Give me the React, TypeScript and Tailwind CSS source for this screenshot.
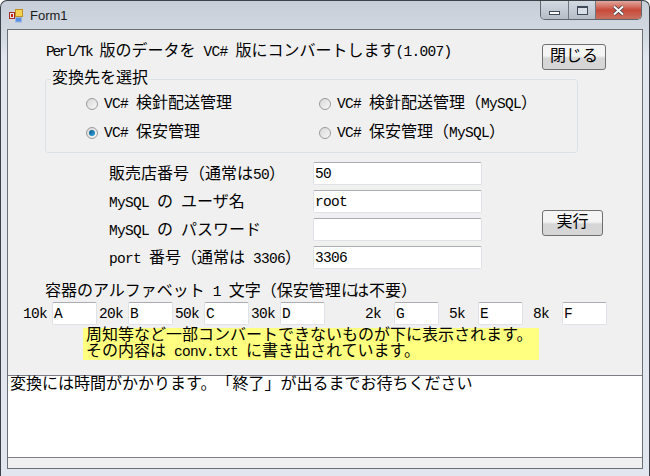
const font = { fontFamily: '"Liberation Mono", "Noto Sans CJK JP", monospace' };

// half-width runs sit at 8px per character next to the 16px kana/kanji
const T = ({ text, tight }: { text: string; tight?: boolean }) => (
  <>
    {text.split(/([\x20-\x7e]+)/).map((part, i) =>
      /^[\x20-\x7e]+$/.test(part) ? (
        <span key={i} className={tight ? "text-[14.5px] tracking-[-2.2px]" : "text-[14.5px] tracking-[-0.7px]"}>
          {part}
        </span>
      ) : (
        part
      ),
    )}
  </>
);

const Radio = ({ checked, label, width }: { checked?: boolean; label: string; width: string }) => (
  <div className={`flex items-center gap-[6px] ${width}`}>
    <span className="flex h-[12px] w-[12px] shrink-0 items-center justify-center rounded-full border border-[#9a9a9a] bg-gradient-to-br from-[#d8d8d8] to-[#f8f8f8]">
      {checked && <span className="h-[6px] w-[6px] rounded-full bg-gradient-to-br from-[#0a5a8c] to-[#2fa6dc]" />}
    </span>
    <span className="whitespace-pre"><T text={label} /></span>
  </div>
);

const Field = ({ value, width }: { value?: string; width: string }) => (
  <div className={`h-[23px] shrink-0 rounded-[2px] border border-[#dfe3e8] border-t-[#abadb3] bg-white pl-[1px] leading-[22px] ${width}`}>
    <T text={value ?? ""} />
  </div>
);

const Button = ({ label, width, height }: { label: string; width: string; height: string }) => (
  <div className={`flex items-center justify-center rounded-[3px] border border-[#707070] bg-gradient-to-b from-[#f4f4f4] from-45% to-[#d6d6d6] to-55% ${width} ${height}`}>
    {label}
  </div>
);

const Size = ({ label, value }: { label: string; value: string }) => (
  <div className="flex items-center">
    <span className="w-[29px]"><T text={label} /></span>
    <Field value={value} width="w-[45px]" />
  </div>
);

export default function App() {
  const fields = [
    ["販売店番号（通常は50）", "50"],
    ["MySQL の ユーザ名", "root"],
    ["MySQL の パスワード", ""],
    ["port 番号（通常は 3306）", "3306"],
  ];

  return (
    <div
      className="flex h-[476px] w-[650px] flex-col overflow-hidden rounded-t-[7px] border border-b-0 border-[#3c4148] bg-gradient-to-b from-[#c6ced8] via-[#d5dbe3] via-[8%] to-[#e2e7ef] to-[12%] text-[16px] leading-[18px] text-black [text-spacing-trim:space-all]"
      style={font}
    >
      {/* title bar */}
      <div className="flex h-[28px] shrink-0 items-start">
        <div className="mt-[8px] ml-[8px] flex items-center gap-[7px] font-['Liberation_Sans'] text-[13px] leading-[14px] text-[#1a1a1a]">
          <svg width="14" height="14" viewBox="0 0 14 14">
            <rect x="0.5" y="3.5" width="5" height="6" fill="#e8e8e8" stroke="#a0302a" />
            <rect x="2" y="5" width="2" height="3" fill="#c81e14" />
            <rect x="6.5" y="0.5" width="7" height="7" fill="#f6d050" stroke="#c09020" />
            <rect x="6.5" y="8.5" width="6" height="4.5" fill="#5a8ee0" stroke="#9ab4e0" />
            <rect x="0.5" y="10.5" width="4" height="3" fill="#d8d8d8" />
          </svg>
          <span>Form1</span>
        </div>
        <div className="mr-[7px] ml-auto flex h-[19px] w-[102px] overflow-hidden rounded-b-[5px] border border-t-0 border-[#5f666e]">
          <div className="flex w-[28px] items-end justify-center border-r border-[#6f767e] bg-gradient-to-b from-[#d4dae2] to-[#b4bcc6] pb-[4px]">
            <span className="h-[4px] w-[11px] border border-[#3f4a58] bg-white" />
          </div>
          <div className="flex w-[27px] items-center justify-center border-r border-[#6f767e] bg-gradient-to-b from-[#d4dae2] to-[#b4bcc6]">
            <span className="h-[9px] w-[11px] border border-t-2 border-[#3f4a58] bg-[#d8dee6]" />
          </div>
          <div className="flex flex-1 items-center justify-center bg-gradient-to-b from-[#dfa79e] via-[#c8493a] to-[#c9705f]">
            <svg width="13" height="11" viewBox="0 0 13 11">
              <path d="M2 1.5 L11 9.5 M11 1.5 L2 9.5" stroke="#3a3f47" strokeWidth="3.4" />
              <path d="M2 1.5 L11 9.5 M11 1.5 L2 9.5" stroke="#fff" strokeWidth="2" />
            </svg>
          </div>
        </div>
      </div>

      {/* client area */}
      <div className="mx-[6px] flex h-[440px] shrink-0 flex-col border border-[#6b7076] bg-[#f0f0f0]">
        <div className="flex h-[50px] shrink-0 items-start justify-between pt-[14px] pr-[36px] pl-[38px]">
          <span className="mt-[-1px] whitespace-pre">
            <T text="Perl/Tk" tight /><T text=" 版のデータを VC# 版にコンバートします(1.007)" />
          </span>
          <Button label="閉じる" width="w-[64px]" height="h-[26px]" />
        </div>

        <fieldset className="mt-[-10px] ml-[37px] h-[83px] w-[533px] shrink-0 rounded-[3px] border border-[#dce1e6] pl-[5px]">
          <legend className="px-[1px] leading-[18px]">変換先を選択</legend>
          <div className="mt-[1px] ml-[35px] flex h-[29px] items-center">
            <Radio label="VC# 検針配送管理" width="w-[233px]" />
            <Radio label="VC# 検針配送管理（MySQL）" width="w-[220px]" />
          </div>
          <div className="ml-[35px] flex h-[29px] items-center">
            <Radio checked label="VC# 保安管理" width="w-[233px]" />
            <Radio label="VC# 保安管理（MySQL）" width="w-[220px]" />
          </div>
        </fieldset>

        <div className="mt-[9px] flex shrink-0 items-center pr-[39px] pl-[101px]">
          <div className="flex w-[373px] flex-col gap-[5px]">
            {fields.map(([label, value]) => (
              <div key={label} className="flex items-center">
                <span className="w-[204px] pt-[2px] whitespace-pre"><T text={label} /></span>
                <Field value={value} width="w-[169px]" />
              </div>
            ))}
          </div>
          <div className="mt-[14px] ml-auto">
            <Button label="実行" width="w-[61px]" height="h-[26px]" />
          </div>
        </div>

        <div className="mt-[14px] pl-[37px] whitespace-pre">
          <T text="容器のアルファベット 1 文字（保安管理" />
          <span className="tracking-[-4px]">には</span>
          <span className="ml-[4px]">不要）</span>
        </div>

        <div className="mt-[1px] flex shrink-0 pl-[15px]">
          <div className="flex gap-[2px]">
            <Size label="10k" value="A" />
            <Size label="20k" value="B" />
            <Size label="50k" value="C" />
            <Size label="30k" value="D" />
          </div>
          <div className="ml-[40px] flex gap-[10px]">
            <Size label="2k" value="G" />
            <Size label="5k" value="E" />
            <Size label="8k" value="F" />
          </div>
        </div>

        <div className="mt-[3px] ml-[75px] h-[32px] w-[456px] shrink-0 bg-[#ffff80] pl-[3px] leading-[16px]">
          <div>周知等など一部コンバートできないものが下に表示されます。</div>
          <div className="whitespace-pre"><T text="その内容は conv.txt に書き出されています。" /></div>
        </div>

        <div className="mt-[15px] h-[83px] w-full shrink-0 border-y border-[#7c7f8a] bg-white px-[2px] leading-[18px]">
          変換には時間がかかります。「終了」が出るまでお待ちください
        </div>
      </div>
    </div>
  );
}
